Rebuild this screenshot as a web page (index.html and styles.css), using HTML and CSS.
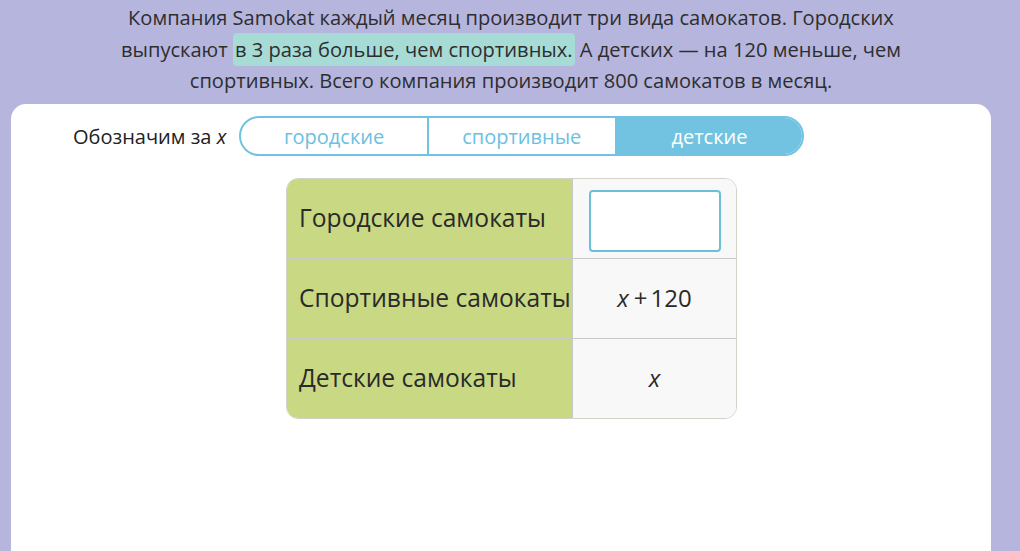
FILE: index.html
```html
<!DOCTYPE html>
<html lang="ru">
<head>
<meta charset="utf-8">
<link rel="stylesheet" href="styles.css">
</head>
<body>
<div class="page">
  <p class="task">Компания Samokat каждый месяц производит три вида самокатов. Городских<br>выпускают <span class="hl">в 3 раза больше, чем спортивных.</span> А детских — на 120 меньше, чем<br>спортивных. Всего компания производит 800 самокатов в месяц.</p>
  <div class="card">
    <div class="choose">
      <span class="label">Обозначим за <i>x</i></span>
      <div class="seg">
        <div class="opt">городские</div>
        <div class="opt">спортивные</div>
        <div class="opt active">детские</div>
      </div>
    </div>
    <div class="table">
      <div class="row">
        <div class="name">Городские самокаты</div>
        <div class="val"><div class="input"></div></div>
      </div>
      <div class="row">
        <div class="name">Спортивные самокаты</div>
        <div class="val"><i>x</i><span class="op">+</span>120</div>
      </div>
      <div class="row">
        <div class="name">Детские самокаты</div>
        <div class="val"><i>x</i></div>
      </div>
    </div>
  </div>
</div>
</body>
</html>
```
FILE: styles.css
```css
* { box-sizing: border-box; }
html, body {
  margin: 0;
  padding: 0;
  background: #b5b5de;
  font-family: "Open Sans", "Noto Sans", sans-serif;
  color: #2f2f2f;
  overflow: hidden;
}
.page {
  width: 1020px;
  height: 551px;
  display: flex;
  flex-direction: column;
  align-items: center;
}
.task {
  margin: 2px 0 0 0;
  padding-left: 2px;
  font-size: 20.1px;
  line-height: 31.5px;
  text-align: center;
  height: 102px;
  color: #2e2e2e;
}
.hl {
  background: #a6dbd6;
  border-radius: 4px;
  padding: 3px 2px;
}
.card {
  align-self: stretch;
  margin: 0 29px 0 11px;
  background: #fff;
  border-radius: 15px 15px 0 0;
  flex: 1;
  padding-top: 12px;
  display: flex;
  flex-direction: column;
  align-items: flex-start;
}
.choose {
  display: flex;
  align-items: center;
  margin-left: 62px;
}
.label {
  font-size: 20px;
  color: #222;
  margin-right: 13px;
}
.seg {
  display: flex;
  width: 565px;
  height: 40px;
  border: 2px solid #72c3e1;
  border-radius: 20px;
  overflow: hidden;
}
.opt {
  flex: 1;
  display: flex;
  align-items: center;
  justify-content: center;
  font-size: 20px;
  color: #6cc0df;
  border-left: 2px solid #72c3e1;
}
.opt:first-child { border-left: none; }
.opt.active {
  background: #72c3e1;
  color: #fff;
}
.table {
  margin-top: 22px;
  margin-left: 275px;
  width: 451px;
  border: 1px solid #d2d2c8;
  border-radius: 12px;
  overflow: hidden;
  display: flex;
  flex-direction: column;
}
.row {
  display: flex;
  height: 80px;
  border-top: 1px solid #c8c8c8;
}
.row:first-child { border-top: none; height: 79px; }
.name {
  width: 285px;
  background: #c9d883;
  display: flex;
  align-items: center;
  padding: 0 0 2px 12px;
  font-size: 24.6px;
  color: #2a2a2a;
}
.val {
  flex: 1;
  background: #f8f8f8;
  border-left: 1px solid #c8c8c8;
  display: flex;
  align-items: center;
  justify-content: center;
  padding-bottom: 2px;
  font-size: 24px;
  color: #2a2a2a;
}
.op { margin: 0 3px 0 5px; }
.input {
  width: 132px;
  height: 62px;
  background: #fff;
  border: 2px solid #6cbfd9;
  border-radius: 4px;
  margin-top: 6px;
}
```
